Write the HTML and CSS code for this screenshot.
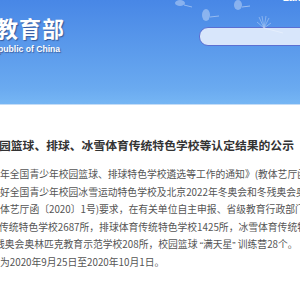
FILE: index.html
```html
<!DOCTYPE html>
<html lang="zh-CN">
<head>
    <meta charset="UTF-8">
    <meta name="viewport" content="width=device-width, initial-scale=1.0">
    <title>教育部 - 公示</title>
    <link rel="stylesheet" href="styles.css">
</head>
<body>

    <div class="header">
        <!-- 蒲公英装饰 -->
        <svg class="seeds" width="300" height="60" viewBox="0 0 300 60">
            <g fill="#fff" stroke="#fff">
                <ellipse cx="180" cy="3" rx="5" ry="3" opacity="0.35" stroke="none"/>
                <line x1="184" y1="5" x2="192" y2="7" stroke-width="1" opacity="0.4"/>
                <ellipse cx="238" cy="5" rx="4" ry="5" opacity="0.35" stroke="none"/>
                <line x1="242" y1="7" x2="250" y2="6" stroke-width="1" opacity="0.45"/>
                <ellipse cx="206" cy="15" rx="4" ry="6" opacity="0.35" stroke="none"/>
                <line x1="210" y1="17" x2="219" y2="16" stroke-width="1" opacity="0.4"/>
                <g opacity="0.55" stroke-width="0.6">
                    <line x1="264" y1="28" x2="259" y2="17"/>
                    <line x1="264" y1="28" x2="262" y2="16"/>
                    <line x1="264" y1="28" x2="266" y2="16"/>
                    <line x1="264" y1="28" x2="269" y2="18"/>
                    <line x1="264" y1="28" x2="257" y2="22"/>
                    <line x1="264" y1="28" x2="271" y2="23"/>
                    <line x1="264" y1="28" x2="283" y2="33"/>
                </g>
            </g>
        </svg>

        <div class="logo">
            <div class="logo-cn">教育部</div>
            <div class="logo-en">public of China</div>
        </div>
        <div class="top-right">
            <div class="lang">Language</div>
            <div class="search"></div>
        </div>
    </div>

    <div class="content">
        <h1 class="title">园篮球、排球、冰雪体育传统特色学校等认定结果的公示</h1>
        <div class="text">
            <p class="line">年全国青少年校园篮球、排球特色学校遴选等工作的通知》(教体艺厅函〔2020〕</p>
            <p class="line">好全国青少年校园冰雪运动特色学校及北京2022年冬奥会和冬残奥会奥林匹克</p>
            <p class="line">体艺厅函〔2020〕1号)要求，在有关单位自主申报、省级教育行政部门推荐</p>
            <p class="line line-cut">传统特色学校2687所，排球体育传统特色学校1425所，冰雪体育传统特色学校</p>
            <p class="line line-half">残奥会奥林匹克教育示范学校208所，校园篮球 <span class="quote">“</span>满天星<span class="quote">”</span> 训练营28个。</p>
            <p class="line">为2020年9月25日至2020年10月1日。</p>
        </div>
    </div>

</body>
</html>
```

FILE: styles.css
```css
body {
    margin: 0;
    width: 300px;
    height: 300px;
    overflow: hidden;
    background-color: #fff;
    font-family: "Noto Sans CJK SC", "Noto Sans", sans-serif;
}

.header {
    position: relative;
    height: 104px;
    display: flex;
    justify-content: space-between;
    align-items: flex-start;
    background: linear-gradient(#4887e6, #6aaaf0 85%, #76b6f4);
    border-bottom: 1px solid #c4dcf6;
    overflow: hidden;
}

.seeds {
    position: absolute;
    left: 0;
    top: 0;
}

.logo {
    margin-left: -4px;
    padding-top: 13px;
    color: #fff;
}

.logo-cn {
    font-size: 22px;
    font-weight: bold;
    line-height: 29px;
    letter-spacing: 1px;
    text-shadow: 1px 1px 1px rgba(30, 40, 90, 0.55);
}

.logo-en {
    margin-left: 2px;
    margin-top: 2px;
    font-family: "Liberation Sans", Arial, sans-serif;
    font-size: 8.6px;
    font-weight: bold;
    line-height: 10px;
    text-shadow: 1px 1px 1px rgba(30, 40, 90, 0.5);
}

.top-right {
    display: flex;
    flex-direction: column;
    align-items: flex-end;
}

.lang {
    margin-top: -7px;
    margin-right: -30px;
    color: #fff;
    font-family: "Liberation Sans", Arial, sans-serif;
    font-size: 10px;
    font-weight: bold;
    line-height: 10px;
}

.search {
    margin-top: 24px;
    margin-right: -30px;
    width: 129px;
    height: 17px;
    border: 1px solid #5b6fd2;
    border-radius: 9px;
    background-color: #d8e6fb;
}

.content {
    padding-top: 32px;
}

.title {
    margin: 0 0 0 -1px;
    font-size: 11.8px;
    line-height: 16px;
    font-weight: bold;
    color: #333;
    white-space: nowrap;
}

.text {
    margin-top: 13px;
}

.line {
    margin: 0;
    font-size: 9.8px;
    line-height: 17.6px;
    color: #555;
    white-space: nowrap;
}

.line-cut {
    margin-left: -1px;
}

.line-half {
    margin-left: -5px;
}

.quote {
    font-family: "Liberation Sans", Arial, sans-serif;
}
```
